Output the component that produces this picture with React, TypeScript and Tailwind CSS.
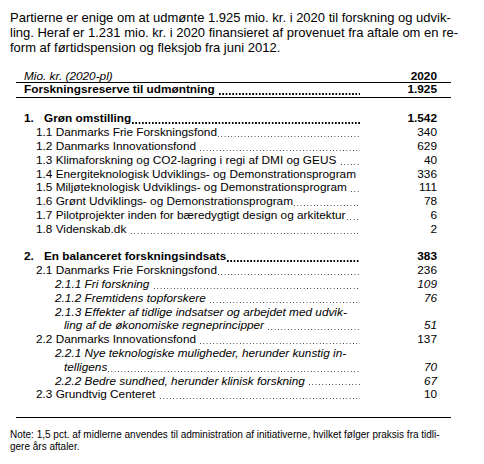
import React from "react";

type Row = {
  label?: string;
  num?: string;
  level: 0 | 1 | 2 | 3;
  prefix?: string;
  bold?: boolean;
  italic?: boolean;
  dots?: boolean;
  blank?: boolean;
};

const rows: Row[] = [
  { prefix: "1.", label: "Grøn omstilling", num: "1.542", level: 0, bold: true, dots: true },
  { label: "1.1 Danmarks Frie Forskningsfond", num: "340", level: 1, dots: true },
  { label: "1.2 Danmarks Innovationsfond ", num: "629", level: 1, dots: true },
  { label: "1.3 Klimaforskning og CO2-lagring i regi af DMI og GEUS ", num: "40", level: 1, dots: true },
  { label: "1.4 Energiteknologisk Udviklings- og Demonstrationsprogram", num: "336", level: 1 },
  { label: "1.5 Miljøteknologisk Udviklings- og Demonstrationsprogram ", num: "111", level: 1, dots: true },
  { label: "1.6 Grønt Udviklings- og Demonstrationsprogram", num: "78", level: 1, dots: true },
  { label: "1.7 Pilotprojekter inden for bæredygtigt design og arkitektur", num: "6", level: 1, dots: true },
  { label: "1.8 Videnskab.dk ", num: "2", level: 1, dots: true },
  { level: 0, blank: true },
  { prefix: "2.", label: "En balanceret forskningsindsats", num: "383", level: 0, bold: true, dots: true },
  { label: "2.1 Danmarks Frie Forskningsfond", num: "236", level: 1, dots: true },
  { label: "2.1.1 Fri forskning ", num: "109", level: 2, italic: true, dots: true },
  { label: "2.1.2 Fremtidens topforskere ", num: "76", level: 2, italic: true, dots: true },
  { label: "2.1.3 Effekter af tidlige indsatser og arbejdet med udvik-", level: 2, italic: true },
  { label: "ling af de økonomiske regneprincipper ", num: "51", level: 3, italic: true, dots: true },
  { label: "2.2 Danmarks Innovationsfond ", num: "137", level: 1, dots: true },
  { label: "2.2.1 Nye teknologiske muligheder, herunder kunstig in-", level: 2, italic: true },
  { label: "telligens", num: "70", level: 3, italic: true, dots: true },
  { label: "2.2.2 Bedre sundhed, herunder klinisk forskning ", num: "67", level: 2, italic: true, dots: true },
  { label: "2.3 Grundtvig Centeret ", num: "10", level: 1, dots: true },
];

function Leader({ bold }: { bold?: boolean }) {
  return bold ? (
    <span className="min-w-[0px] flex-1 self-stretch bg-[linear-gradient(to_right,#000_1.8px,transparent_1.8px)] bg-[length:3.33px_1.5px] bg-[position:1px_9.3px] bg-repeat-x" />
  ) : (
    <span className="min-w-[0px] flex-1 self-stretch bg-[linear-gradient(to_right,#333_1px,transparent_1px)] bg-[length:3.33px_1.1px] bg-[position:1px_9.8px] bg-repeat-x" />
  );
}

function TableRow({ r }: { r: Row }) {
  if (r.blank) return <div className="h-[13.8px]" />;
  const pad =
    r.level === 0 ? "pl-[8px]" : r.level === 1 ? "pl-[20px]" : r.level === 2 ? "pl-[39px]" : "pl-[48px]";
  return (
    <div className={`flex h-[13.8px] ${r.bold ? "font-bold" : ""} ${r.italic ? "italic" : ""}`}>
      <div className={`flex w-[344px] whitespace-nowrap ${pad}`}>
        {r.prefix && <span className="w-[20px] shrink-0">{r.prefix}</span>}
        <span className="whitespace-pre">{r.label}</span>
        {r.dots && <Leader bold={r.bold} />}
      </div>
      <div className="w-[77px] text-right">{r.num}</div>
    </div>
  );
}

export default function App() {
  return (
    <div className="h-[464px] w-[484px] overflow-hidden bg-white text-black font-['Liberation_Sans',Arial,sans-serif]">
      <p className="pl-[10px] pt-[9.5px] text-[13px] leading-[15px]">
        Partierne er enige om at udmønte 1.925 mio. kr. i 2020 til forskning og udvik-
        <br />
        ling. Heraf er 1.231 mio. kr. i 2020 finansieret af provenuet fra aftale om en re-
        <br />
        form af førtidspension og fleksjob fra juni 2012.
      </p>
      <div className="ml-[16px] mt-[15px] w-[435px] text-[11.8px] leading-[13.8px]">
        <div className="flex h-[13.8px] border-b border-black">
          <div className="w-[344px] pl-[8px] italic">Mio. kr. (2020-pl)</div>
          <div className="w-[77px] text-right font-bold">2020</div>
        </div>
        <div className="flex h-[14.6px] border-b border-black font-bold">
          <div className="flex w-[344px] whitespace-nowrap pl-[8px]">
            <span className="whitespace-pre">Forskningsreserve til udmøntning </span>
            <Leader bold />
          </div>
          <div className="w-[77px] text-right">1.925</div>
        </div>
        <div className="h-[14.6px]" />
        {rows.map((r, i) => (
          <TableRow key={i} r={r} />
        ))}
        <div className="mt-[14.6px] border-b border-black" />
      </div>
      <p className="mt-[11px] pl-[10px] text-[10px] leading-[12.5px]">
        Note: 1,5 pct. af midlerne anvendes til administration af initiativerne, hvilket følger praksis fra tidli-
        <br />
        gere års aftaler.
      </p>
    </div>
  );
}
